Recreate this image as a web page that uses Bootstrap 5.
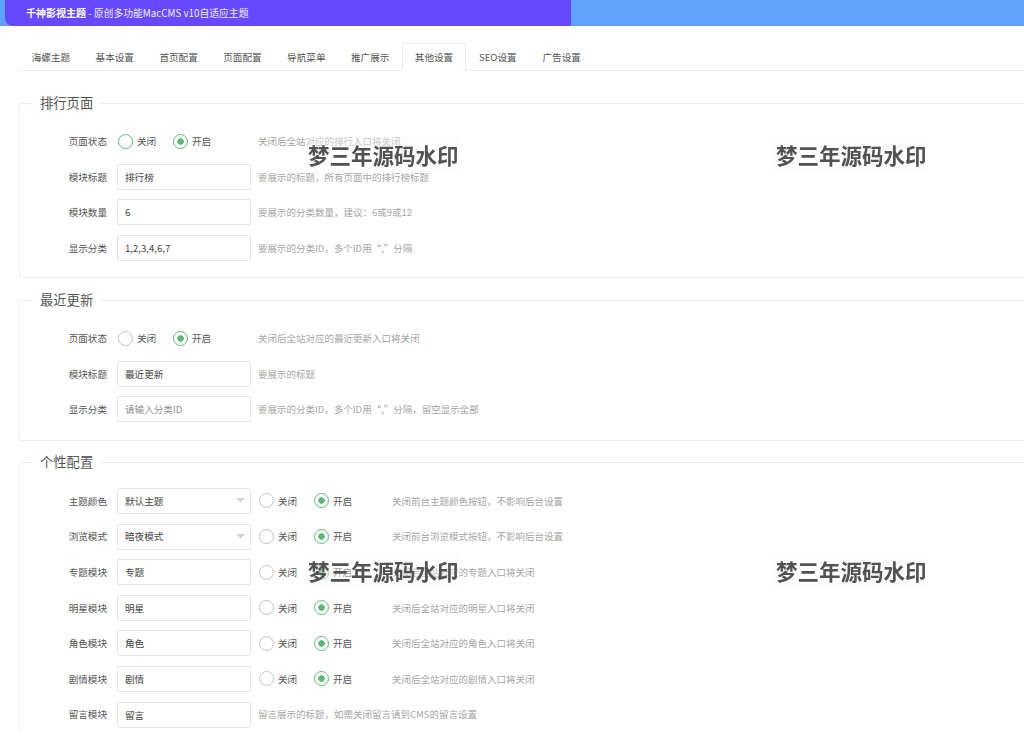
<!DOCTYPE html>
<html lang="zh-CN">
<head>
<meta charset="utf-8">
<title>其他设置</title>
<link href="https://cdn.jsdelivr.net/npm/bootstrap@5.3.0/dist/css/bootstrap.min.css" rel="stylesheet">
<style>
html,body{height:732px;overflow:hidden}
body{background:#fff;font-family:"Noto Sans CJK SC","Noto Sans",sans-serif;font-size:9.6px;color:#555;position:relative}
.topbar{height:26px;background:#5fa2fd}
.topbrand{width:566px;margin-left:5px;height:26px;background:#6548ff;border-bottom-left-radius:8px;padding-left:21px;color:#f1eeff;line-height:26px;font-size:9.8px}
.topbrand b{font-size:10px;font-weight:700;color:#fff}
.tabbar{margin:17px 0 0 19px;border-bottom:1px solid #e9e9e9;height:28px;flex-wrap:nowrap}
.tabbar .nav-link{width:63.85px;height:28px;padding:0;line-height:27px;text-align:center;color:#555;font-size:9.6px;border-radius:2px 2px 0 0;border-color:transparent}
.tabbar .nav-link.active{color:#555;border-color:#e9e9e9 #e9e9e9 #fff}
.panel{margin:0 -40px 0 19px;border:1px solid #eee;border-radius:2px;padding:0;min-width:0}
.panel legend{float:none;width:auto;margin:0 0 0 12px;padding:0 8px;font-size:13.3px;line-height:18px;color:#555;font-weight:400}
.sec1{margin-top:23px;height:184px}
.sec2{margin-top:13px;height:150px}
.sec3{margin-top:12px;height:300px}
.sec1 .rows,.sec2 .rows{padding-top:16.4px}
.sec3 .rows{padding-top:17.2px}
.frow{height:25.6px;margin-bottom:10px}
.flabel{width:87px;text-align:right;margin-right:10px;flex:none;color:#555}
.field.form-control,.field.form-select{width:134px;height:26px;flex:none;font-size:9.6px;padding:0 7px;border:1px solid #e6e6e6;border-radius:2px;color:#444;box-shadow:none;min-height:0}
.field.form-control::placeholder{color:#8f8f8f}
.field.form-select{background-image:url("data:image/svg+xml,%3Csvg xmlns='http://www.w3.org/2000/svg' width='9' height='5'%3E%3Cpath d='M0 0h9L4.500 4.500z' fill='%23d2d2d2'/%3E%3C/svg%3E");background-size:9px 5px;background-position:right 5px center}
.pick{margin:0;padding:0;min-height:0;width:55px;display:flex;align-items:center;flex:none}
.pick .form-check-input{width:15px;height:15px;margin:0 4px 0 0;float:none;flex:none;border:1px solid #c2c2c2;background:#fff}
.pick .form-check-input:checked{border-color:#5fb878;background:radial-gradient(circle,#5fb878 0 3px,#fff 3.5px)}
.pick .form-check-input.hot{border-color:#5fb878}
.pick label{color:#555;font-size:9.6px}
.opts{margin-left:1px;width:140px;flex:none}
.opts.wide{margin-left:8px;width:133px}
.hint{color:#a6a6a6;white-space:nowrap;font-size:9.5px}
.hint.after{margin-left:7px}
.wm-mark{position:absolute;font-size:21.5px;line-height:36px;font-weight:700;color:#525252;white-space:nowrap;background:rgba(250,250,250,.4);padding:0 2px;filter:blur(.6px)}
.w1{left:306px;top:137px}.w2{left:774px;top:137px}.w3{left:306px;top:553px}.w4{left:774px;top:553px}
</style>
</head>
<body>
<div class="topbar"><div class="topbrand"><b>千神影视主题</b> - 原创多功能MacCMS v10自适应主题</div></div>

<ul class="nav nav-tabs tabbar">
<li class="nav-item"><a class="nav-link" href="#">海螺主题</a></li>
<li class="nav-item"><a class="nav-link" href="#">基本设置</a></li>
<li class="nav-item"><a class="nav-link" href="#">首页配置</a></li>
<li class="nav-item"><a class="nav-link" href="#">页面配置</a></li>
<li class="nav-item"><a class="nav-link" href="#">导航菜单</a></li>
<li class="nav-item"><a class="nav-link" href="#">推广展示</a></li>
<li class="nav-item"><a class="nav-link active" href="#">其他设置</a></li>
<li class="nav-item"><a class="nav-link" href="#">SEO设置</a></li>
<li class="nav-item"><a class="nav-link" href="#">广告设置</a></li>
</ul>

<fieldset class="panel sec1">
<legend>排行页面</legend>
<div class="rows">
<div class="frow d-flex align-items-center"><span class="flabel">页面状态</span>
<div class="opts d-flex"><div class="form-check pick"><input class="form-check-input hot" type="radio" name="a1" id="a1a"><label for="a1a">关闭</label></div><div class="form-check pick"><input class="form-check-input" type="radio" name="a1" id="a1b" checked><label for="a1b">开启</label></div></div>
<span class="hint">关闭后全站对应的排行入口将关闭</span></div>
<div class="frow d-flex align-items-center"><span class="flabel">模块标题</span><input class="form-control field" value="排行榜"><span class="hint after">要展示的标题，所有页面中的排行榜标题</span></div>
<div class="frow d-flex align-items-center"><span class="flabel">模块数量</span><input class="form-control field" value="6"><span class="hint after">要展示的分类数量，建议：6或9或12</span></div>
<div class="frow d-flex align-items-center"><span class="flabel">显示分类</span><input class="form-control field" value="1,2,3,4,6,7"><span class="hint after">要展示的分类ID，多个ID用“,”分隔</span></div>
</div>
</fieldset>

<fieldset class="panel sec2">
<legend>最近更新</legend>
<div class="rows">
<div class="frow d-flex align-items-center"><span class="flabel">页面状态</span>
<div class="opts d-flex"><div class="form-check pick"><input class="form-check-input" type="radio" name="a2" id="a2a"><label for="a2a">关闭</label></div><div class="form-check pick"><input class="form-check-input" type="radio" name="a2" id="a2b" checked><label for="a2b">开启</label></div></div>
<span class="hint">关闭后全站对应的最近更新入口将关闭</span></div>
<div class="frow d-flex align-items-center"><span class="flabel">模块标题</span><input class="form-control field" value="最近更新"><span class="hint after">要展示的标题</span></div>
<div class="frow d-flex align-items-center"><span class="flabel">显示分类</span><input class="form-control field" placeholder="请输入分类ID"><span class="hint after">要展示的分类ID，多个ID用“,”分隔，留空显示全部</span></div>
</div>
</fieldset>

<fieldset class="panel sec3">
<legend>个性配置</legend>
<div class="rows">
<div class="frow d-flex align-items-center"><span class="flabel">主题颜色</span><select class="form-select field"><option>默认主题</option></select>
<div class="opts wide d-flex"><div class="form-check pick"><input class="form-check-input" type="radio" name="b1" id="b1a"><label for="b1a">关闭</label></div><div class="form-check pick"><input class="form-check-input" type="radio" name="b1" id="b1b" checked><label for="b1b">开启</label></div></div>
<span class="hint">关闭前台主题颜色按钮，不影响后台设置</span></div>
<div class="frow d-flex align-items-center"><span class="flabel">浏览模式</span><select class="form-select field"><option>暗夜模式</option></select>
<div class="opts wide d-flex"><div class="form-check pick"><input class="form-check-input" type="radio" name="b2" id="b2a"><label for="b2a">关闭</label></div><div class="form-check pick"><input class="form-check-input" type="radio" name="b2" id="b2b" checked><label for="b2b">开启</label></div></div>
<span class="hint">关闭前台浏览模式按钮，不影响后台设置</span></div>
<div class="frow d-flex align-items-center"><span class="flabel">专题模块</span><input class="form-control field" value="专题">
<div class="opts wide d-flex"><div class="form-check pick"><input class="form-check-input" type="radio" name="b3" id="b3a"><label for="b3a">关闭</label></div><div class="form-check pick"><input class="form-check-input" type="radio" name="b3" id="b3b" checked><label for="b3b">开启</label></div></div>
<span class="hint">关闭后全站对应的专题入口将关闭</span></div>
<div class="frow d-flex align-items-center"><span class="flabel">明星模块</span><input class="form-control field" value="明星">
<div class="opts wide d-flex"><div class="form-check pick"><input class="form-check-input" type="radio" name="b4" id="b4a"><label for="b4a">关闭</label></div><div class="form-check pick"><input class="form-check-input" type="radio" name="b4" id="b4b" checked><label for="b4b">开启</label></div></div>
<span class="hint">关闭后全站对应的明星入口将关闭</span></div>
<div class="frow d-flex align-items-center"><span class="flabel">角色模块</span><input class="form-control field" value="角色">
<div class="opts wide d-flex"><div class="form-check pick"><input class="form-check-input" type="radio" name="b5" id="b5a"><label for="b5a">关闭</label></div><div class="form-check pick"><input class="form-check-input" type="radio" name="b5" id="b5b" checked><label for="b5b">开启</label></div></div>
<span class="hint">关闭后全站对应的角色入口将关闭</span></div>
<div class="frow d-flex align-items-center"><span class="flabel">剧情模块</span><input class="form-control field" value="剧情">
<div class="opts wide d-flex"><div class="form-check pick"><input class="form-check-input" type="radio" name="b6" id="b6a"><label for="b6a">关闭</label></div><div class="form-check pick"><input class="form-check-input" type="radio" name="b6" id="b6b" checked><label for="b6b">开启</label></div></div>
<span class="hint">关闭后全站对应的剧情入口将关闭</span></div>
<div class="frow d-flex align-items-center"><span class="flabel">留言模块</span><input class="form-control field" value="留言"><span class="hint after">留言展示的标题，如需关闭留言请到CMS的留言设置</span></div>
</div>
</fieldset>

<div class="wm-mark w1">梦三年源码水印</div>
<div class="wm-mark w2">梦三年源码水印</div>
<div class="wm-mark w3">梦三年源码水印</div>
<div class="wm-mark w4">梦三年源码水印</div>
</body>
</html>
